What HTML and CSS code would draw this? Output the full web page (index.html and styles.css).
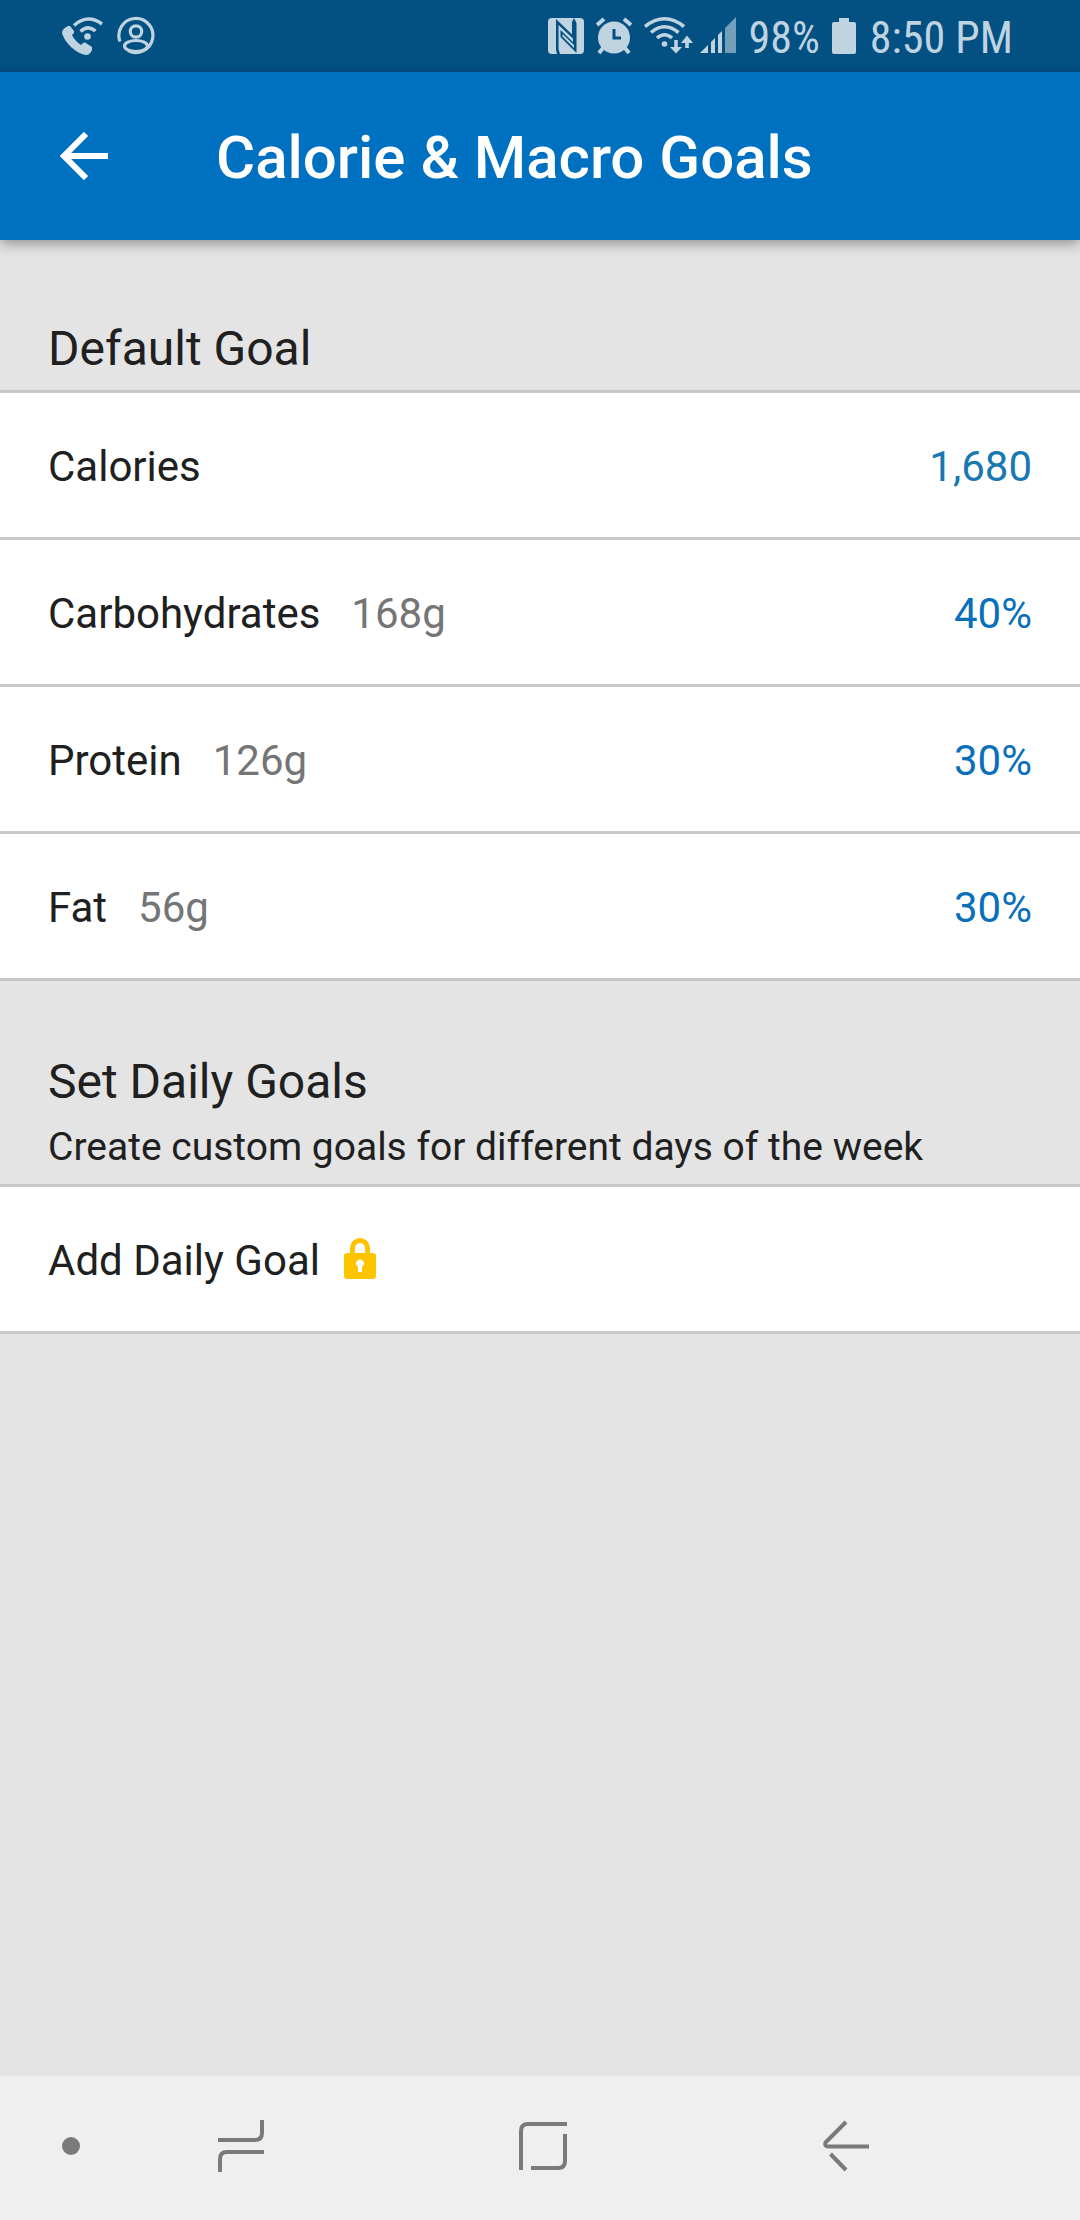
FILE: index.html
```html
<!DOCTYPE html>
<html lang="en">
<head>
<meta charset="utf-8">
<meta name="viewport" content="width=device-width, initial-scale=1">
<title>Calorie &amp; Macro Goals</title>
<link rel="stylesheet" href="styles.css">
</head>
<body>
<div class="screen">
  <div class="status">
    <div class="status-group status-left">
      <svg width="42" height="40" viewBox="0 0 42 40" aria-hidden="true">
        <path fill="currentColor" d="M7 10Q1 13 1 17C4 27 14 37 25 39Q29 39 31 34V31L24 26.500Q22 26 20 29Q14 25 11 19L13 17V15L9 10Z"/>
        <circle cx="26.500" cy="20.500" r="3.300" fill="currentColor"/>
        <path fill="none" stroke="currentColor" stroke-width="3.400" d="M13 9.500Q26.500-2.500 41 8M19.500 15.500Q27 8.500 34.500 15"/>
      </svg>
      <svg width="38" height="40" viewBox="0 0 38 40" aria-hidden="true">
        <g fill="none" stroke="currentColor" stroke-width="3.200">
          <path d="M3 25.500A17 17 0 1 1 11 34.500"/>
          <circle cx="19" cy="15.500" r="5.700"/>
          <ellipse cx="19" cy="30" rx="11.500" ry="5.500"/>
        </g>
      </svg>
    </div>
    <div class="status-group status-right">
      <svg width="36" height="40" viewBox="0 0 36 40" aria-hidden="true">
        <rect y="2" width="36" height="36" rx="4" fill="currentColor"/>
        <path class="cutout" d="M8 3L24 18.500V6L26 2L28.500 7V37L12.500 21V14L25 26V22.500L10.500 9V33L12 38H9L8 34Z"/>
        <path fill="currentColor" d="M14.500 18V20.500L26 32V29Z"/>
      </svg>
      <svg width="36" height="40" viewBox="0 0 36 40" aria-hidden="true">
        <circle cx="18" cy="21.500" r="16" fill="currentColor"/>
        <path fill="none" stroke="currentColor" stroke-width="4" d="M1 9L8 3M28 3L35 9M7 32L3 37M29 32L33 37"/>
        <path class="clock-hands" d="M18 13V22H25"/>
      </svg>
      <svg class="wifi" width="50" height="40" viewBox="0 0 50 40" aria-hidden="true">
        <g fill="none" stroke="currentColor" stroke-width="3.600">
          <path d="M1 10.500Q20.500-5 40 10.500M7 16.500Q20.500 5 34.500 16.500M13 22Q20.500 15.500 28 22"/>
          <path d="M32 24V35M43 32V23"/>
        </g>
        <circle cx="20.500" cy="28" r="2.800" fill="currentColor"/>
        <path fill="currentColor" d="M26 31H38L32 37.500ZM37 27H49L43 19.500Z"/>
      </svg>
      <svg width="37" height="40" viewBox="0 0 37 40" aria-hidden="true">
        <path fill="currentColor" d="M0 37L8 29V37ZM11 37V26L15 22V37ZM18 37V19L22 15V37Z"/>
        <path fill="currentColor" opacity=".6" d="M25 37V12L36 1V37Z"/>
      </svg>
      <span class="status-text">98%</span>
      <svg class="battery" width="24" height="40" viewBox="0 0 24 40" aria-hidden="true">
        <path fill="currentColor" d="M7 2H17V6H22Q24 6 24 8V36Q24 38 22 38H2Q0 38 0 36V8Q0 6 2 6H7Z"/>
      </svg>
      <span class="status-text">8:50 PM</span>
    </div>
  </div>

  <header class="appbar">
    <button class="back" type="button" aria-label="Back">
      <svg width="48" height="48" viewBox="0 0 48 48" aria-hidden="true">
        <path fill="none" stroke="currentColor" stroke-width="6" d="M26 2L4 24L26 46M5 24H48"/>
      </svg>
    </button>
    <h1 class="title">Calorie &amp; Macro Goals</h1>
  </header>

  <main class="content">
    <section>
      <div class="section-head"><h2 class="section-title">Default Goal</h2></div>
      <ul class="list">
        <li><button class="row" type="button"><span>Calories</span><span class="value value-total">1,680</span></button></li>
        <li><button class="row" type="button"><span>Carbohydrates</span><span class="grams">168g</span><span class="value">40%</span></button></li>
        <li><button class="row" type="button"><span>Protein</span><span class="grams">126g</span><span class="value">30%</span></button></li>
        <li><button class="row" type="button"><span>Fat</span><span class="grams">56g</span><span class="value">30%</span></button></li>
      </ul>
    </section>
    <section>
      <div class="section-head">
        <h2 class="section-title">Set Daily Goals</h2>
        <p class="section-note">Create custom goals for different days of the week</p>
      </div>
      <ul class="list">
        <li><button class="row" type="button"><span>Add Daily Goal</span>
          <svg class="lock" width="32" height="42" viewBox="0 0 32 42" aria-hidden="true">
            <path fill="none" stroke="currentColor" stroke-width="5" d="M8.500 18V10A7.500 7.500 0 0 1 23.500 10V18"/>
            <path fill="currentColor" fill-rule="evenodd" d="M3 15H29Q32 15 32 18V38Q32 41 29 41H3Q0 41 0 38V18Q0 15 3 15ZM14 29V34H18V29A4 4 0 1 0 14 29Z"/>
          </svg></button></li>
      </ul>
    </section>
  </main>

  <nav class="navbar" aria-label="System navigation">
    <button class="nav-dot" type="button" aria-label="Pin navigation bar">
      <svg width="18" height="18" viewBox="0 0 18 18" aria-hidden="true"><circle cx="9" cy="9" r="9" fill="currentColor"/></svg>
    </button>
    <button class="nav-button" type="button" aria-label="Recent apps">
      <svg width="48" height="54" viewBox="0 0 48 54" aria-hidden="true">
        <path fill="none" stroke="currentColor" stroke-width="4" d="M0 21H37Q44 21 44 14V1M46 33H9Q2 33 2 40V53"/>
      </svg>
    </button>
    <button class="nav-button" type="button" aria-label="Home">
      <svg width="50" height="54" viewBox="0 0 50 54" aria-hidden="true">
        <path fill="none" stroke="currentColor" stroke-width="4" d="M2 51V12Q2 5 9 5H48M46 15V42Q46 49 39 49H12"/>
      </svg>
    </button>
    <button class="nav-button" type="button" aria-label="Back">
      <svg width="48" height="54" viewBox="0 0 48 54" aria-hidden="true">
        <path fill="none" stroke="currentColor" stroke-width="4" d="M24 3L3.500 23.500Q2 27 6 27.500H47M8.500 35L24 51"/>
      </svg>
    </button>
  </nav>
</div>
</body>
</html>
```
FILE: styles.css
```css
* { box-sizing: border-box; }

body {
  margin: 0;
  font-family: Roboto, "Liberation Sans", sans-serif;
  color: #202020;
  background: #e4e4e4;
}

button {
  margin: 0;
  padding: 0;
  border: 0;
  background: none;
  color: inherit;
  font: inherit;
}

svg { display: block; flex: none; }

h1, h2, p, ul { margin: 0; padding: 0; font-weight: 400; }

.screen {
  display: flex;
  flex-direction: column;
  min-height: 100vh;
}

.status {
  display: flex;
  align-items: center;
  justify-content: space-between;
  height: 72px;
  padding: 0 67px 0 61px;
  background: #035083;
  color: #bfd3e0;
  font: 44px/68px "Roboto Condensed", Roboto, sans-serif;
  white-space: nowrap;
}

.status-group { display: flex; align-items: center; }
.status-left { gap: 14px; }
.status-right { gap: 12px; }
.wifi { margin-right: -6px; }
.status-text { padding-top: 3px; }
.battery { margin-right: 2px; }

.cutout { fill: #035083; }
.clock-hands { fill: none; stroke: #035083; stroke-width: 3; }

.appbar {
  display: flex;
  align-items: center;
  gap: 108px;
  height: 168px;
  padding: 0 60px;
  background: #0070c0;
  color: #fff;
  box-shadow: 0 4px 12px rgba(0, 0, 0, .35);
}

.title { padding-top: 4px; font-size: 60px; line-height: 72px; font-weight: 500; }

.content { flex: 1; padding-top: 8px; }

.section-head {
  display: flex;
  flex-direction: column;
  gap: 13px;
  padding: 73px 48px 13px;
}

.section-title { font-size: 48px; line-height: 56px; }
.section-note { font-size: 39px; line-height: 48px; }

.list {
  list-style: none;
  border-top: 3px solid #c8c8c8;
  background: #fff;
}

.row {
  display: flex;
  align-items: center;
  width: 100%;
  height: 147px;
  padding: 0 48px;
  border-bottom: 3px solid #c8c8c8;
  font-size: 42px;
  line-height: 50px;
  text-align: left;
}

.row span { padding-top: 3px; }

.grams { margin-left: 31px; color: #757575; }
.value { margin-left: auto; color: #0a6fba; }
.value-total { color: #1878b2; }
.lock { margin-left: 24px; color: #ffc400; }

.navbar {
  display: flex;
  height: 144px;
  padding: 0 83px 5px 51px;
  background: #efefef;
  color: #7a7a7a;
}

.nav-dot, .nav-button {
  display: flex;
  align-items: center;
  justify-content: center;
}

.nav-dot { width: 40px; }
.nav-button { flex: 1; }
```
